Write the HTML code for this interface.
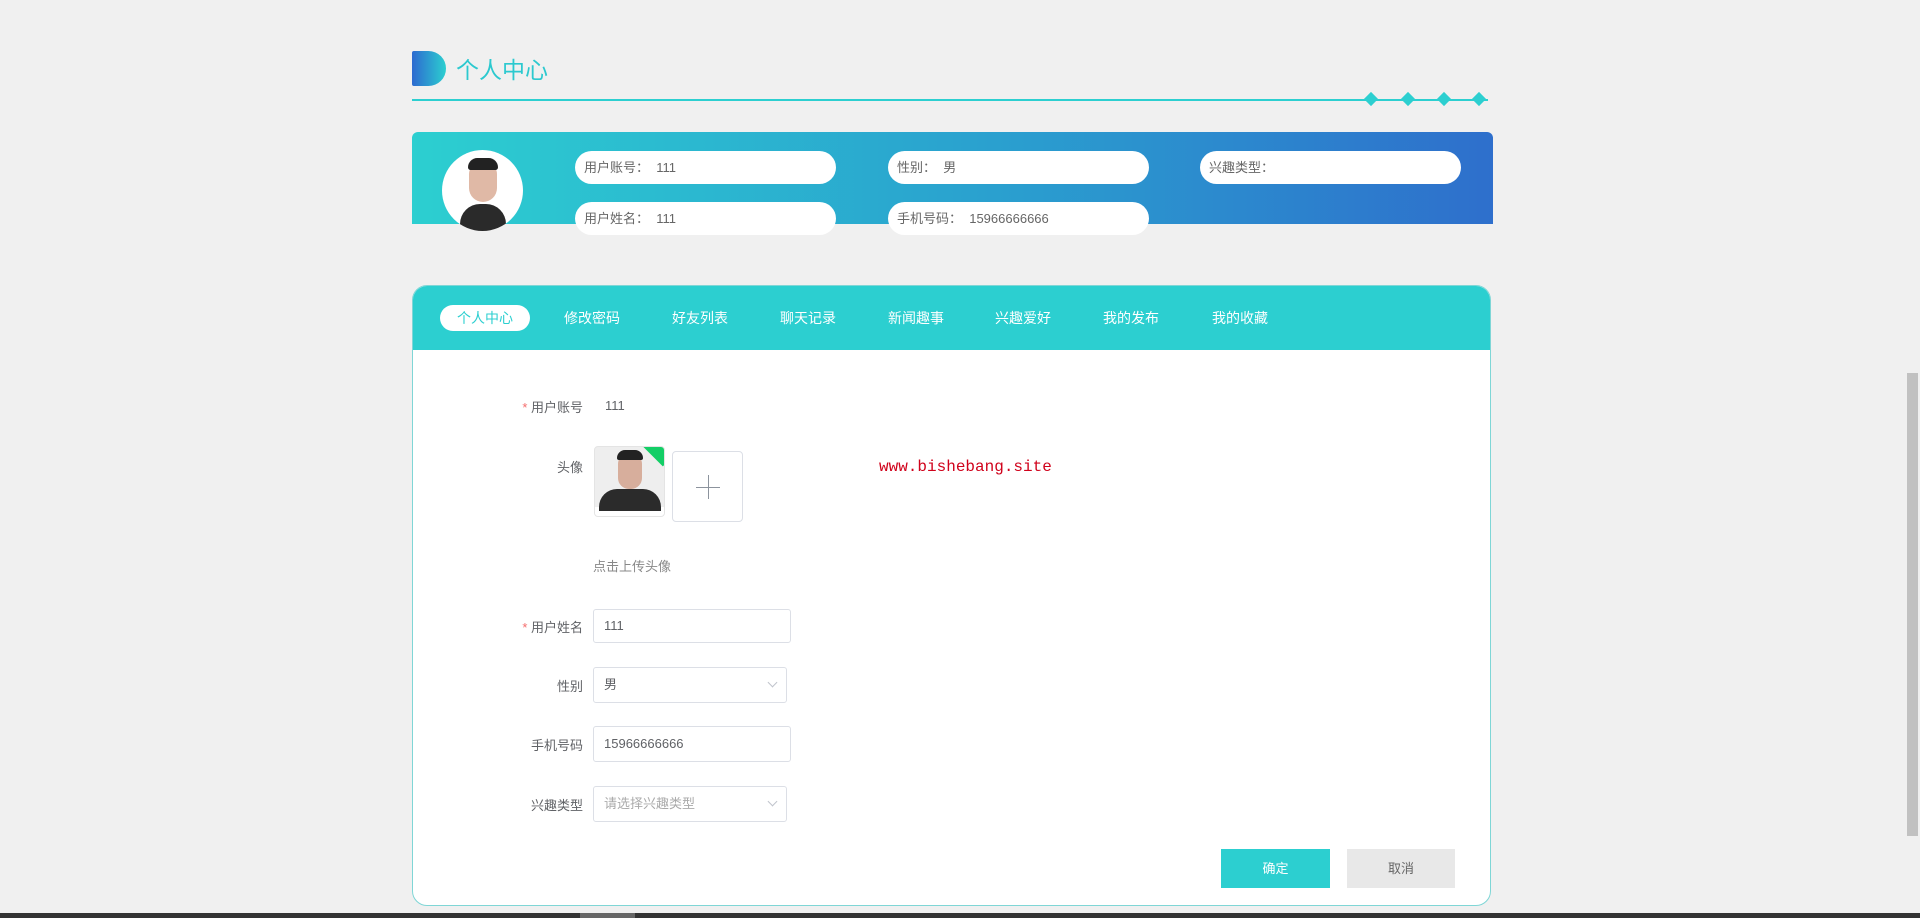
<!DOCTYPE html>
<html><head><meta charset="utf-8"><style>
*{box-sizing:border-box;margin:0;padding:0}
body{width:1920px;height:918px;overflow:hidden;background:#f0f0f0;font-family:"Liberation Sans","Noto Sans CJK SC",sans-serif;position:relative;color:#606266}
.a{position:absolute}
.pill{position:absolute;height:33px;background:#fff;border-radius:17px;font-size:13px;color:#666;line-height:33px;padding-left:9px}
.tab{position:absolute;top:308px;font-size:14px;color:#fff;line-height:20px}
.lbl{position:absolute;right:1337px;font-size:13px;color:#606266;white-space:nowrap}
.inp{position:absolute;border:1px solid #dcdfe6;border-radius:3px;background:#fff;font-size:13px;color:#606266;padding-left:10px}
.star{color:#f56c6c}
.arr{position:absolute;right:10px;top:11px;width:7px;height:7px;border-right:1px solid #c0c4cc;border-bottom:1px solid #c0c4cc;transform:rotate(45deg)}
</style></head><body>
<div class="a" style="left:412px;top:51px;width:34px;height:35px;border-radius:2px 18px 18px 2px;background:linear-gradient(90deg,#2d6ad0,#2ccfd0)"></div>
<div class="a" style="left:456px;top:51px;font-size:23px;color:#2cc9cf">个人中心</div>
<div class="a" style="left:412px;top:99px;width:1076px;height:2px;background:#2ccfd0"></div>
<div class="a" style="left:1366px;top:94px;width:10px;height:10px;background:#2ccfd0;transform:rotate(45deg)"></div>
<div class="a" style="left:1403px;top:94px;width:10px;height:10px;background:#2ccfd0;transform:rotate(45deg)"></div>
<div class="a" style="left:1439px;top:94px;width:10px;height:10px;background:#2ccfd0;transform:rotate(45deg)"></div>
<div class="a" style="left:1474px;top:94px;width:10px;height:10px;background:#2ccfd0;transform:rotate(45deg)"></div>

<div class="a" style="left:412px;top:132px;width:1081px;height:92px;border-radius:6px 6px 0 0;background:linear-gradient(90deg,#2ccfd0,#2a9fcf 55%,#2e6fcc)"></div>
<div class="a" style="left:442px;top:150px;width:81px;height:81px;border-radius:50%;background:#fff;overflow:hidden">
 <div class="a" style="left:18px;top:54px;width:46px;height:40px;border-radius:20px 20px 0 0;background:#2a2a2a"></div>
 <div class="a" style="left:27px;top:12px;width:28px;height:40px;border-radius:13px 13px 15px 15px;background:#e0b9a6"></div>
 <div class="a" style="left:26px;top:8px;width:30px;height:12px;border-radius:14px 14px 4px 4px;background:#222"></div>
</div>
<div class="pill" style="left:575px;top:151px;width:261px">用户账号：&nbsp;&nbsp;111</div>
<div class="pill" style="left:888px;top:151px;width:261px">性别：&nbsp;&nbsp;男</div>
<div class="pill" style="left:1200px;top:151px;width:261px">兴趣类型：</div>
<div class="pill" style="left:575px;top:202px;width:261px">用户姓名：&nbsp;&nbsp;111</div>
<div class="pill" style="left:888px;top:202px;width:261px">手机号码：&nbsp;&nbsp;15966666666</div>

<div class="a" style="left:412px;top:285px;width:1079px;height:621px;border:1px solid #7fd6d6;border-radius:15px;background:#fff;overflow:hidden">
 <div class="a" style="left:0;top:0;width:100%;height:64px;background:#2ccfd0"></div>
</div>
<div class="a" style="left:440px;top:305px;width:90px;height:26px;border-radius:13px;background:#fff;color:#2ccfd0;font-size:14px;text-align:center;line-height:26px">个人中心</div>
<div class="tab" style="left:564px">修改密码</div>
<div class="tab" style="left:672px">好友列表</div>
<div class="tab" style="left:780px">聊天记录</div>
<div class="tab" style="left:888px">新闻趣事</div>
<div class="tab" style="left:995px">兴趣爱好</div>
<div class="tab" style="left:1103px">我的发布</div>
<div class="tab" style="left:1212px">我的收藏</div>

<div class="lbl" style="top:397px"><span class="star">* </span>用户账号</div>
<div class="a" style="left:605px;top:398px;font-size:13px;color:#606266">111</div>
<div class="lbl" style="top:457px">头像</div>
<div class="a" style="left:594px;top:446px;width:71px;height:71px;border:1px solid #e4e4e4;border-radius:4px;background:#eee;overflow:hidden">
 <div class="a" style="left:0;top:60px;width:71px;height:11px;background:#fff"></div>
 <div class="a" style="left:4px;top:42px;width:62px;height:22px;border-radius:18px 18px 0 0;background:#2b2b2b"></div>
 <div class="a" style="left:23px;top:6px;width:24px;height:36px;border-radius:11px;background:#d7ae9c"></div>
 <div class="a" style="left:22px;top:3px;width:26px;height:10px;border-radius:12px 12px 3px 3px;background:#222"></div>
 <div class="a" style="left:50px;top:-10px;width:30px;height:22px;background:#13ce66;transform:rotate(45deg)"></div>
</div>
<div class="a" style="left:672px;top:451px;width:71px;height:71px;border:1px solid #dcdfe6;border-radius:4px;background:#fff">
 <div class="a" style="left:23px;top:35px;width:24px;height:1px;background:#8c939d"></div>
 <div class="a" style="left:35px;top:23px;width:1px;height:24px;background:#8c939d"></div>
</div>
<div class="a" style="left:879px;top:458px;font-family:'Liberation Mono',monospace;font-size:16px;color:#d0021b">www.bishebang.site</div>
<div class="a" style="left:593px;top:556px;font-size:13px;color:#888">点击上传头像</div>

<div class="lbl" style="top:617px"><span class="star">* </span>用户姓名</div>
<div class="inp" style="left:593px;top:609px;width:198px;height:34px;line-height:32px">111</div>
<div class="lbl" style="top:676px">性别</div>
<div class="inp" style="left:593px;top:667px;width:194px;height:36px;line-height:34px">男<span class="arr"></span></div>
<div class="lbl" style="top:735px">手机号码</div>
<div class="inp" style="left:593px;top:726px;width:198px;height:36px;line-height:34px">15966666666</div>
<div class="lbl" style="top:795px">兴趣类型</div>
<div class="inp" style="left:593px;top:786px;width:194px;height:36px;line-height:34px;color:#aaa">请选择兴趣类型<span class="arr"></span></div>

<div class="a" style="left:1221px;top:849px;width:109px;height:39px;background:#2ccfd0;color:#fff;font-size:13px;text-align:center;line-height:39px">确定</div>
<div class="a" style="left:1347px;top:849px;width:108px;height:39px;background:#e8e8e8;color:#666;font-size:13px;text-align:center;line-height:39px">取消</div>

<div class="a" style="left:1905px;top:0;width:15px;height:913px;background:#f0f0f0"></div>
<div class="a" style="left:1907px;top:373px;width:11px;height:463px;background:#c1c1c1"></div>
<div class="a" style="left:0;top:913px;width:1920px;height:5px;background:#333"></div>
<div class="a" style="left:580px;top:913px;width:55px;height:5px;background:#666"></div>
</body></html>
